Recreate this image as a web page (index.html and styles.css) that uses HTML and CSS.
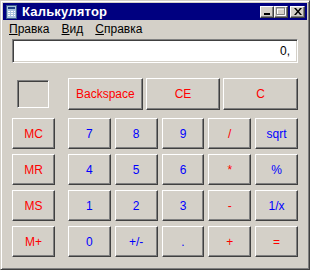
FILE: index.html
```html
<!DOCTYPE html>
<html>
    <head>
        <meta charset="utf-8">
        <link rel="stylesheet" href="styles.css">
    </head>
    <body>
        <div class="window">
            <div class="titlebar">
                <svg class="appIcon" width="11" height="14" viewBox="0 0 11 14">
                    <rect x="0.5" y="0.5" width="10" height="13" fill="#a9c3de" stroke="#3a5a8c"/>
                    <rect x="2" y="2" width="7" height="2" fill="#1f3f86"/>
                    <rect x="2" y="6" width="2" height="1" fill="#ffffff"/>
                    <rect x="5" y="6" width="2" height="1" fill="#ffffff"/>
                    <rect x="8" y="6" width="1" height="1" fill="#ffffff"/>
                    <rect x="2" y="8" width="2" height="1" fill="#ffffff"/>
                    <rect x="5" y="8" width="2" height="1" fill="#ffffff"/>
                    <rect x="8" y="8" width="1" height="1" fill="#ffffff"/>
                    <rect x="2" y="10" width="2" height="1" fill="#ffffff"/>
                    <rect x="5" y="10" width="2" height="1" fill="#ffffff"/>
                    <rect x="8" y="10" width="1" height="1" fill="#ffffff"/>
                </svg>
                <span class="title">Калькулятор</span>
                <div class="capBtns">
                    <div class="capBtn">
                        <svg width="8" height="7" viewBox="0 0 8 7"><rect x="1" y="5" width="6" height="2" fill="#000"/></svg>
                    </div>
                    <div class="capBtn">
                        <svg width="10" height="9" viewBox="0 0 10 9">
                            <path d="M1.5 1.5h8v7h-8z M1 2h9" fill="none" stroke="#ffffff"/>
                            <path d="M0.5 0.5h8v7h-8z M0 1h9" fill="none" stroke="#808080"/>
                        </svg>
                    </div>
                    <div class="capBtn close">
                        <svg width="8" height="7" viewBox="0 0 8 7">
                            <path d="M0 0h2l2 2.5l2-2.5h2l-3 3.5l3 3.5h-2l-2-2.5l-2 2.5h-2l3-3.5z" fill="#000"/>
                        </svg>
                    </div>
                </div>
            </div>
            <div class="menubar">
                <span class="menu"><u>П</u>равка</span>
                <span class="menu"><u>В</u>ид</span>
                <span class="menu"><u>С</u>правка</span>
            </div>
            <div class="client">
                <div class="display">0,</div>
                <div class="keys">
                    <div class="memCol">
                        <div class="memBox"></div>
                        <button class="key red">MC</button>
                        <button class="key red">MR</button>
                        <button class="key red">MS</button>
                        <button class="key red">M+</button>
                    </div>
                    <div class="mainCol">
                        <div class="topRow">
                            <button class="key red">Backspace</button>
                            <button class="key red">CE</button>
                            <button class="key red">C</button>
                        </div>
                        <div class="pad">
                            <button class="key blue">7</button>
                            <button class="key blue">8</button>
                            <button class="key blue">9</button>
                            <button class="key red">/</button>
                            <button class="key blue">sqrt</button>
                            <button class="key blue">4</button>
                            <button class="key blue">5</button>
                            <button class="key blue">6</button>
                            <button class="key red">*</button>
                            <button class="key blue">%</button>
                            <button class="key blue">1</button>
                            <button class="key blue">2</button>
                            <button class="key blue">3</button>
                            <button class="key red">-</button>
                            <button class="key blue">1/x</button>
                            <button class="key blue">0</button>
                            <button class="key blue">+/-</button>
                            <button class="key blue">.</button>
                            <button class="key red">+</button>
                            <button class="key red">=</button>
                        </div>
                    </div>
                </div>
            </div>
        </div>
    </body>
</html>
```
FILE: styles.css
```css
html, body {
    margin: 0;
    padding: 0;
    background: #d4d0c8;
    font-family: "Liberation Sans", Arial, sans-serif;
}
.window {
    box-sizing: border-box;
    width: 310px;
    height: 270px;
    background: #d4d0c8;
    border: 1px solid;
    border-color: #d4d0c8 #404040 #404040 #d4d0c8;
    box-shadow: inset 1px 1px #ffffff, inset -1px -1px #808080;
    padding: 2px;
}
.titlebar {
    height: 17px;
    background: #000080;
    display: flex;
    align-items: center;
    padding-left: 3px;
}
.appIcon {
    display: block;
}
.title {
    color: #ffffff;
    font-weight: bold;
    font-size: 13px;
    margin-left: 5px;
    letter-spacing: 0.2px;
}
.capBtns {
    margin-left: auto;
    margin-right: 2px;
    display: flex;
}
.capBtn {
    box-sizing: border-box;
    width: 14px;
    height: 12px;
    background: #d4d0c8;
    border: 1px solid;
    border-color: #ffffff #404040 #404040 #ffffff;
    box-shadow: inset -1px -1px #808080;
    display: flex;
    align-items: center;
    justify-content: center;
}
.capBtn svg {
    display: block;
}
.capBtn.close {
    margin-left: 2px;
    width: 15px;
}
.menubar {
    height: 18px;
    display: flex;
    align-items: center;
    font-size: 12px;
}
.menu {
    padding: 0 6px;
    color: #000000;
}
.client {
    padding: 1px 9px 0 9px;
}
.display {
    box-sizing: border-box;
    height: 24px;
    background: #ffffff;
    border: 1px solid;
    border-color: #808080 #ffffff #ffffff #808080;
    box-shadow: inset 1px 1px #404040, inset -1px -1px #d4d0c8;
    text-align: right;
    font-size: 12px;
    line-height: 22px;
    padding-right: 7px;
}
.keys {
    display: flex;
    gap: 13px;
    margin-top: 15px;
}
.memCol {
    width: 43px;
    display: flex;
    flex-direction: column;
    gap: 5px;
}
.memBox {
    box-sizing: border-box;
    width: 32px;
    height: 28px;
    margin: 2px 0 5px 5px;
    border: 1px solid;
    border-color: #808080 #ffffff #ffffff #808080;
    box-shadow: inset 1px 1px #404040, inset -1px -1px #d4d0c8;
}
.mainCol {
    width: 230px;
}
.topRow {
    display: flex;
    gap: 3px;
    height: 32px;
    margin-bottom: 8px;
}
.topRow .key {
    flex: 1;
    height: 32px;
}
.pad {
    display: grid;
    grid-template-columns: repeat(5, 1fr);
    grid-auto-rows: 31px;
    column-gap: 4px;
    row-gap: 5px;
}
.key {
    box-sizing: border-box;
    height: 31px;
    margin: 0;
    padding: 0;
    background: #d4d0c8;
    border: 1px solid;
    border-color: #ffffff #404040 #404040 #ffffff;
    box-shadow: inset -1px -1px #808080;
    font-family: "Liberation Sans", Arial, sans-serif;
    font-size: 12px;
    cursor: pointer;
}
.key:focus {
    outline: 0;
}
.red {
    color: #ff0000;
}
.blue {
    color: #0000ff;
}
```
